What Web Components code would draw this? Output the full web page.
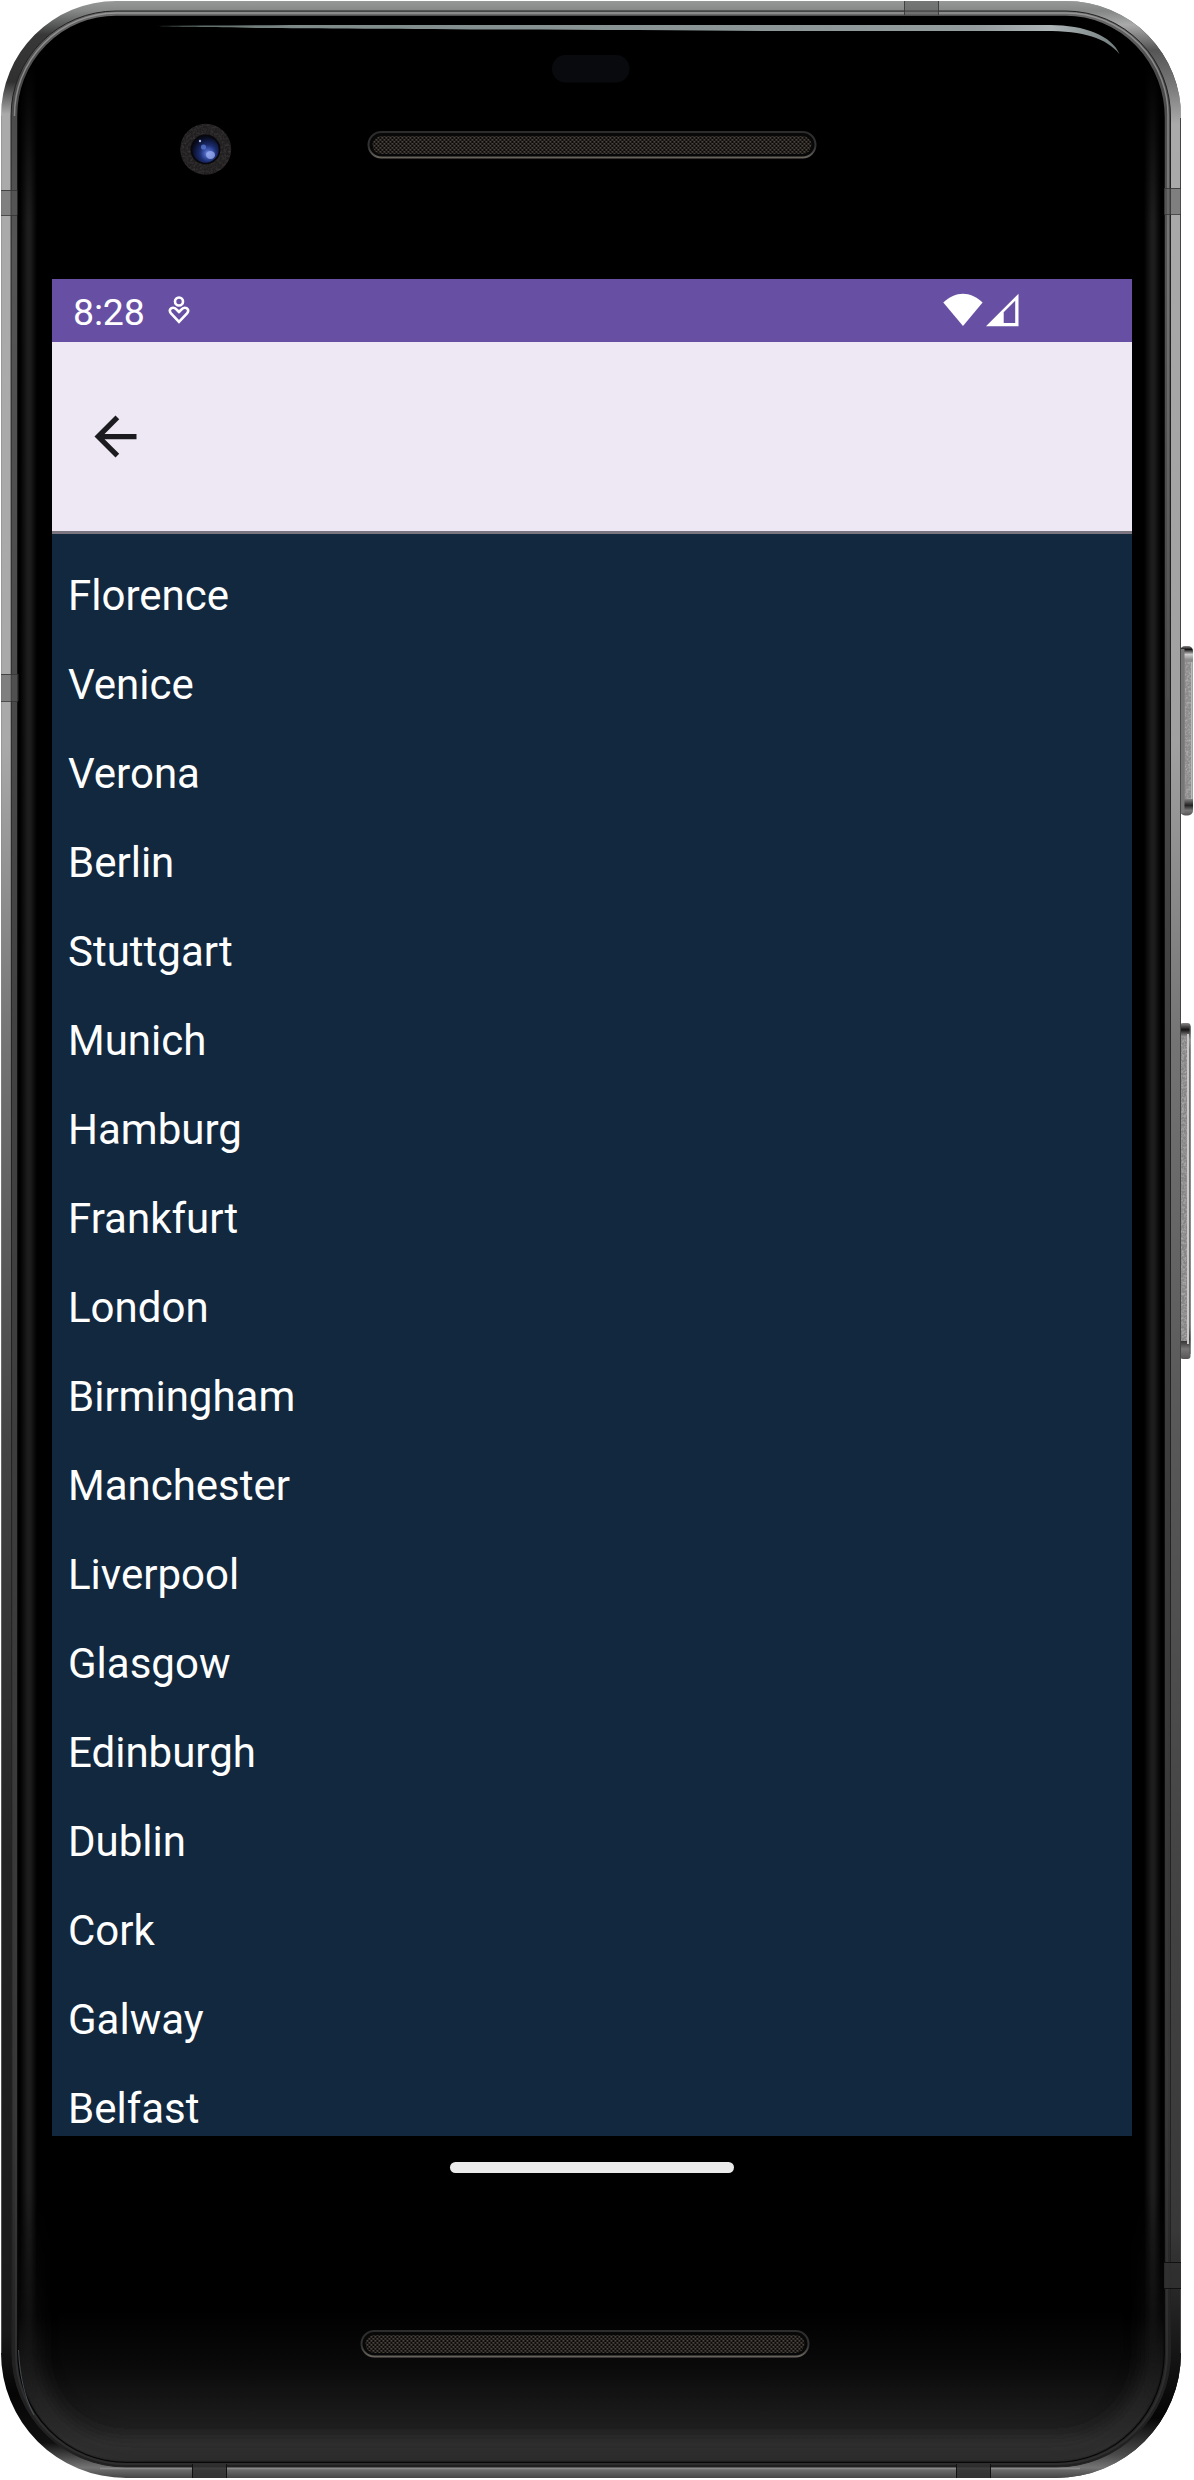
<!DOCTYPE html>
<html lang="en">
<head>
<meta charset="utf-8">
<title>Cities</title>
<style>
html,body{margin:0;background:#fff}
body{width:1194px;height:2480px;overflow:hidden;font-family:Roboto,"Noto Sans",sans-serif}
</style>
</head>
<body>
<phone-frame>
  <status-bar time="8:28"></status-bar>
  <top-bar></top-bar>
  <city-list></city-list>
</phone-frame>
<script>
class PhoneFrame extends HTMLElement{
  constructor(){
    super();
    const body='M1 116A115 115 0 0 1 116 1H1066A115 115 0 0 1 1181 118V2353A125 125 0 0 1 1056 2478H126A125 125 0 0 1 1 2353Z';
    const rim='M11 116A105 105 0 0 1 116 11H1066A105 105 0 0 1 1170.5 118V2353A114 114 0 0 1 1056 2467H126A114 114 0 0 1 12 2353Z';
    const glass='M18 116A98 99 0 0 1 116 16.5H1066A98 101 0 0 1 1164 118V2353A108 109 0 0 1 1056 2462H126A108 109 0 0 1 18 2353Z';
    const speaker=(x,y)=>`<g transform="translate(${x} ${y})"><rect x="1" y="1" width="447" height="25.500" rx="12.750" fill="#080808" stroke="url(#lip)" stroke-width="2"/><rect x="5" y="5" width="439" height="18" rx="9" fill="url(#mesh)"/></g>`;
    this.attachShadow({mode:'open'}).innerHTML=`
    <style>
      :host{display:grid;width:1194px;height:2480px}
      svg,.face{grid-area:1/1}
      svg{display:block}
      .face{display:flex;flex-direction:column;align-items:stretch;padding:279px 62px 281px 52px;z-index:1}
      .screen{height:1857px;display:flex;flex-direction:column;overflow:hidden}
      .nav{height:63px;display:flex;justify-content:center;align-items:center}
      .pill{width:284px;height:11px;border-radius:6px;background:#ebebeb}
    </style>
    <svg width="1194" height="2480" viewBox="0 0 1194 2480" aria-hidden="true">
      <defs>
        <linearGradient id="side" x1="0" y1="0" x2="0" y2="2480" gradientUnits="userSpaceOnUse">
          <stop offset="0" stop-color="#979a99"/><stop offset=".0045" stop-color="#858787"/><stop offset=".014" stop-color="#383838"/><stop offset=".033" stop-color="#303030"/><stop offset=".046" stop-color="#aaa"/>
          <stop offset=".3" stop-color="#a9a9a9"/><stop offset=".42" stop-color="#747474"/><stop offset=".58" stop-color="#444"/><stop offset=".75" stop-color="#232323"/><stop offset=".94" stop-color="#191919"/><stop offset=".965" stop-color="#050505"/><stop offset=".985" stop-color="#101010"/><stop offset=".995" stop-color="#747474"/><stop offset="1" stop-color="#3c3c3c"/>
        </linearGradient>
        <linearGradient id="sideR" x1="0" y1="0" x2="0" y2="2480" gradientUnits="userSpaceOnUse">
          <stop offset="0" stop-color="#979a99"/><stop offset=".0045" stop-color="#858787"/><stop offset=".01" stop-color="#aaa"/><stop offset=".02" stop-color="#555"/><stop offset=".034" stop-color="#777"/><stop offset=".05" stop-color="#aaa"/>
          <stop offset=".3" stop-color="#a0a0a0"/><stop offset=".42" stop-color="#747474"/><stop offset=".56" stop-color="#5a5a5a"/><stop offset=".75" stop-color="#444"/><stop offset=".9" stop-color="#383838"/><stop offset=".955" stop-color="#111"/><stop offset=".975" stop-color="#050505"/><stop offset=".99" stop-color="#4c4c4c"/><stop offset=".995" stop-color="#747474"/><stop offset="1" stop-color="#3c3c3c"/>
        </linearGradient>
        <linearGradient id="rim" x1="0" y1="0" x2="0" y2="2480" gradientUnits="userSpaceOnUse">
          <stop offset="0" stop-color="#717171"/><stop offset=".03" stop-color="#494949"/><stop offset=".1" stop-color="#555"/><stop offset=".4" stop-color="#424242"/><stop offset=".85" stop-color="#363636"/><stop offset=".95" stop-color="#222"/><stop offset="1" stop-color="#202020"/>
        </linearGradient>
        <linearGradient id="edge" x1="0" y1="0" x2="0" y2="700" gradientUnits="userSpaceOnUse">
          <stop offset="0" stop-color="#aaa"/><stop offset=".25" stop-color="#999"/><stop offset="1" stop-color="#505050"/>
        </linearGradient>
        <linearGradient id="glass" x1="0" y1="2310" x2="0" y2="2463" gradientUnits="userSpaceOnUse">
          <stop offset="0" stop-color="#000"/><stop offset=".35" stop-color="#090909"/><stop offset=".65" stop-color="#181818"/><stop offset=".79" stop-color="#202020"/><stop offset=".87" stop-color="#2b2b2b"/><stop offset=".94" stop-color="#2c2c2c"/><stop offset="1" stop-color="#202020"/>
        </linearGradient>
        <linearGradient id="shine" x1="155" y1="0" x2="1120" y2="0" gradientUnits="userSpaceOnUse">
          <stop offset="0" stop-color="#52605c"/><stop offset=".15" stop-color="#7e8b89"/><stop offset=".85" stop-color="#949c9e"/><stop offset=".93" stop-color="#adb5b7"/><stop offset="1" stop-color="#707b7b"/>
        </linearGradient>
        <linearGradient id="glow" x1="0" x2="1"><stop offset="0" stop-color="#1d1d1d" stop-opacity="0"/><stop offset=".45" stop-color="#1d1d1d"/><stop offset=".6" stop-color="#1d1d1d"/><stop offset="1" stop-color="#1d1d1d" stop-opacity="0"/></linearGradient>
        <linearGradient id="fadeSides" x1="0" y1="60" x2="0" y2="2400" gradientUnits="userSpaceOnUse"><stop offset="0" stop-color="#000"/><stop offset=".07" stop-color="#fff"/><stop offset=".91" stop-color="#fff"/><stop offset="1" stop-color="#000"/></linearGradient>
        <linearGradient id="fadeBase" x1="0" y1="2200" x2="0" y2="2440" gradientUnits="userSpaceOnUse"><stop offset="0" stop-color="#000"/><stop offset=".5" stop-color="#444"/><stop offset="1" stop-color="#fff"/></linearGradient>
        <mask id="maskSides" maskUnits="userSpaceOnUse" x="0" y="0" width="1194" height="2480"><rect width="1194" height="2480" fill="url(#fadeSides)"/></mask>
        <mask id="maskBase" maskUnits="userSpaceOnUse" x="0" y="0" width="1194" height="2480"><rect width="1194" height="2480" fill="url(#fadeBase)"/></mask>
        <linearGradient id="lip" x1="0" y1="0" x2="0" y2="1"><stop offset="0" stop-color="#2c2c2c"/><stop offset=".6" stop-color="#333"/><stop offset="1" stop-color="#67625c"/></linearGradient>
        <linearGradient id="key" x1="0" y1="0" x2="0" y2="1"><stop offset="0" stop-color="#888"/><stop offset=".02" stop-color="#111"/><stop offset=".05" stop-color="#ccc"/><stop offset=".08" stop-color="#8c8c8c"/><stop offset=".9" stop-color="#888"/><stop offset=".94" stop-color="#222"/><stop offset=".97" stop-color="#777"/><stop offset="1" stop-color="#555"/></linearGradient>
        <pattern id="mesh" width="4" height="4" patternUnits="userSpaceOnUse"><rect width="4" height="4" fill="#0c0b0a"/><rect x="0" y="0" width="1.700" height="1.700" fill="#544e45"/><rect x="2" y="2" width="1.700" height="1.700" fill="#544e45"/><rect x="1.500" y="1" width="1" height="1" fill="#2c2925"/></pattern>
        <radialGradient id="lens" cx=".6" cy=".65" r=".62"><stop offset="0" stop-color="#7f97e8"/><stop offset=".25" stop-color="#4059b0"/><stop offset=".5" stop-color="#1c2d70"/><stop offset=".8" stop-color="#0f183e"/><stop offset="1" stop-color="#080b1c"/></radialGradient>
        <filter id="soft" x="-20%" y="-20%" width="140%" height="140%"><feGaussianBlur stdDeviation="10"/></filter>
        <filter id="grain" x="0" y="0" width="1" height="1"><feTurbulence type="fractalNoise" baseFrequency=".45" numOctaves="2"/><feColorMatrix values="0 0 0 0 .5  0 0 0 0 .5  0 0 0 0 .5  1.600 0 0 0 -.6"/><feComposite in2="SourceGraphic" operator="in"/></filter>
        <clipPath id="inGlass"><path d="${glass}"/></clipPath>
        <clipPath id="right"><rect x="590" width="604" height="2480"/></clipPath>
      </defs>
      <g>
        <rect x="1180" y="646" width="13" height="169.500" rx="5" fill="url(#key)"/>
        <rect x="1181" y="649" width="3.500" height="164" fill="#777"/>
        <rect x="1185" y="662" width="6" height="137" fill="#8b8b8b"/><rect x="1185" y="662" width="6" height="137" filter="url(#grain)"/>
        <rect x="1191" y="662" width="1.500" height="137" fill="#bbb"/>
        <rect x="1180" y="1023" width="10.500" height="336" rx="3" fill="url(#key)"/>
        <rect x="1181" y="1037" width="6" height="304" fill="#858585"/><rect x="1181" y="1037" width="6" height="304" filter="url(#grain)"/>
        <rect x="1187" y="1034" width="2" height="310" fill="#c9c9c9"/><rect x="1189.500" y="1026" width="1" height="328" fill="#555"/>
      </g>
      <path d="${body}" fill="url(#side)"/>
      <path d="${body}" fill="url(#sideR)" clip-path="url(#right)"/>
      <path d="M1180.500 118V2353" fill="none" stroke="#444"/>
      <path d="M1.500 116V2353" stroke="#888" stroke-opacity=".5" fill="none"/>
      <path d="${rim}" fill="url(#rim)" stroke="#222" stroke-width="1"/>
      <path d="M14.500 116A102 102 0 0 1 116 13H1066A102 102 0 0 1 1168 118V700" fill="none" stroke="url(#edge)" stroke-width="1.500" opacity=".7"/>
      <path d="M16 1500V2353A110 110 0 0 0 126 2464H1056A110 110 0 0 0 1167 2353V1500" fill="none" stroke="#3c3c3c" stroke-width="2" opacity=".5"/>
      <path d="M100 2468.500H1080" stroke="#8a8a8a" stroke-width="1.500"/>
      <path d="${glass}" fill="url(#glass)" stroke="#000" stroke-width="1.500"/>
      <g clip-path="url(#inGlass)">
        <g mask="url(#maskBase)"><path d="M26 2150V2353A100 101 0 0 0 126 2454H1056A100 101 0 0 0 1156 2353V2150" fill="none" stroke="#2e2e2e" stroke-width="22" filter="url(#soft)"/></g>
        <g mask="url(#maskSides)"><rect x="20" y="60" width="17" height="2340" fill="url(#glow)"/><rect x="1144" y="60" width="17" height="2340" fill="url(#glow)"/></g>
      </g>
      <path d="M18.500 2350C20 2380 26 2400 34 2415" fill="none" stroke="#59646c" stroke-width="1" opacity=".7"/>
      <path d="M155 26C230 25 320 25 400 25H1050C1085 25 1112 36 1119.500 54C1106 38 1084 31 1045 31H780C600 30 350 29 260 28C210 27 175 27 155 26Z" fill="url(#shine)"/>
      <g fill="#555" fill-opacity=".5">
        <rect x="1" y="190" width="16.500" height="25"/><rect x="1" y="674" width="17.500" height="27"/>
        <rect x="904" y="1" width="35" height="14"/><rect x="1164" y="188" width="17" height="26"/>
      </g>
      <path d="M1 190.500H17M1 215.500H17M1 674.500H18M1 701.500H18M904.500 1V15M938.500 1V15M1164 188.500H1181M1164 214.500H1181" stroke="#333" stroke-opacity=".8" fill="none"/>
      <g fill="#303030" fill-opacity=".85">
        <rect x="1164" y="2262" width="17" height="27"/><rect x="192" y="2464" width="35" height="14"/><rect x="956" y="2464" width="35" height="14"/>
      </g>
      <path d="M1164 2262.500H1181M1164 2288.500H1181M192.500 2464V2478M226.500 2464V2478M956.500 2464V2478M990.500 2464V2478" stroke="#111" fill="none"/>
      <rect x="552" y="55" width="77.500" height="27.500" rx="13.500" fill="#090a0e"/>
      ${speaker(367.5,131)}${speaker(360.5,2330)}
      <circle cx="205.700" cy="149.300" r="25.500" fill="#211e1f"/><circle cx="205.700" cy="149.300" r="25.500" filter="url(#grain)" opacity=".2"/>
      <circle cx="205.500" cy="149.500" r="15" fill="#07070c"/><circle cx="205.500" cy="149.500" r="13.200" fill="url(#lens)"/>
      <circle cx="203.500" cy="147" r="2.600" fill="#5f82dd" opacity=".7"/><circle cx="200" cy="141" r="1.200" fill="#a9b8e8"/>
      <ellipse cx="210.500" cy="155" rx="4.500" ry="4" fill="#9aaef0" opacity=".75"/>
    </svg>
    <div class="face"><div class="screen"><slot></slot></div><div class="nav"><div class="pill"></div></div></div>`;
  }
}
class StatusBar extends HTMLElement{
  connectedCallback(){
    this.attachShadow({mode:'open'}).innerHTML=`
    <style>
      :host{display:flex;align-items:center;height:63px;flex:none;background:#6750a3;color:#fff;padding:0 113px 0 21px;box-sizing:border-box}
      .time{font-size:37.5px;line-height:44px;margin-top:3px;letter-spacing:-.2px}
      .care{margin-left:23px;margin-top:-1px}
      .net{margin-left:auto;margin-top:-1px}
      svg{display:block;flex:none}
    </style>
    <span class="time">${this.getAttribute('time')}</span>
    <svg class="care" width="22" height="30" viewBox="0 0 22 30" fill="none" stroke="#fff" stroke-width="2.600"><circle cx="11" cy="6.500" r="4"/><path d="M11 26.800 3 18.300C.5 15.500 2.500 12.700 5.300 12.700C8 12.700 9 15.500 11 17C13 15.500 14 12.700 16.700 12.700C19.500 12.700 21.500 15.500 19 18.300Z"/></svg>
    <svg class="net" width="77" height="34" viewBox="0 0 77 34" fill="#fff"><path d="M1.300 9.500C13.500-2.300 28.500-2.300 40.600 9.500L21 33Z"/><path fill-rule="evenodd" d="M76.500.8V33.300H44ZM73.200 7.800 61.700 19.300V30H73.200Z"/></svg>`;
  }
}
class TopBar extends HTMLElement{
  connectedCallback(){
    this.attachShadow({mode:'open'}).innerHTML=`
    <style>
      :host{display:flex;align-items:center;height:192px;flex:none;box-sizing:border-box;background:#eee8f4;border-bottom:3px solid #7a757f;padding-left:32px}
      button{all:unset;display:block}
      svg{display:block}
    </style>
    <button aria-label="Back"><svg width="63" height="63" viewBox="0 0 24 24" fill="#1c1b1f"><path d="M20 11H7.830l5.590-5.590L12 4l-8 8 8 8 1.410-1.410L7.830 13H20v-2z"/></svg></button>`;
  }
}
class CityRow extends HTMLElement{
  connectedCallback(){
    this.attachShadow({mode:'open'}).innerHTML=`
    <style>:host{display:block;padding:13px 16px;font-size:42px;line-height:63px;color:#fff}</style><slot></slot>`;
  }
}
class CityList extends HTMLElement{
  connectedCallback(){
    const names=['Florence','Venice','Verona','Berlin','Stuttgart','Munich','Hamburg','Frankfurt','London','Birmingham','Manchester','Liverpool','Glasgow','Edinburgh','Dublin','Cork','Galway','Belfast'];
    this.attachShadow({mode:'open'}).innerHTML=`
    <style>:host{display:flex;flex-direction:column;flex:1;min-height:0;overflow:hidden;background:#12283f;padding-top:17px}city-row{flex:none}</style>
    ${names.map(n=>`<city-row>${n}</city-row>`).join('')}`;
  }
}
customElements.define('status-bar',StatusBar);
customElements.define('top-bar',TopBar);
customElements.define('city-row',CityRow);
customElements.define('city-list',CityList);
customElements.define('phone-frame',PhoneFrame);
</script>
</body>
</html>
